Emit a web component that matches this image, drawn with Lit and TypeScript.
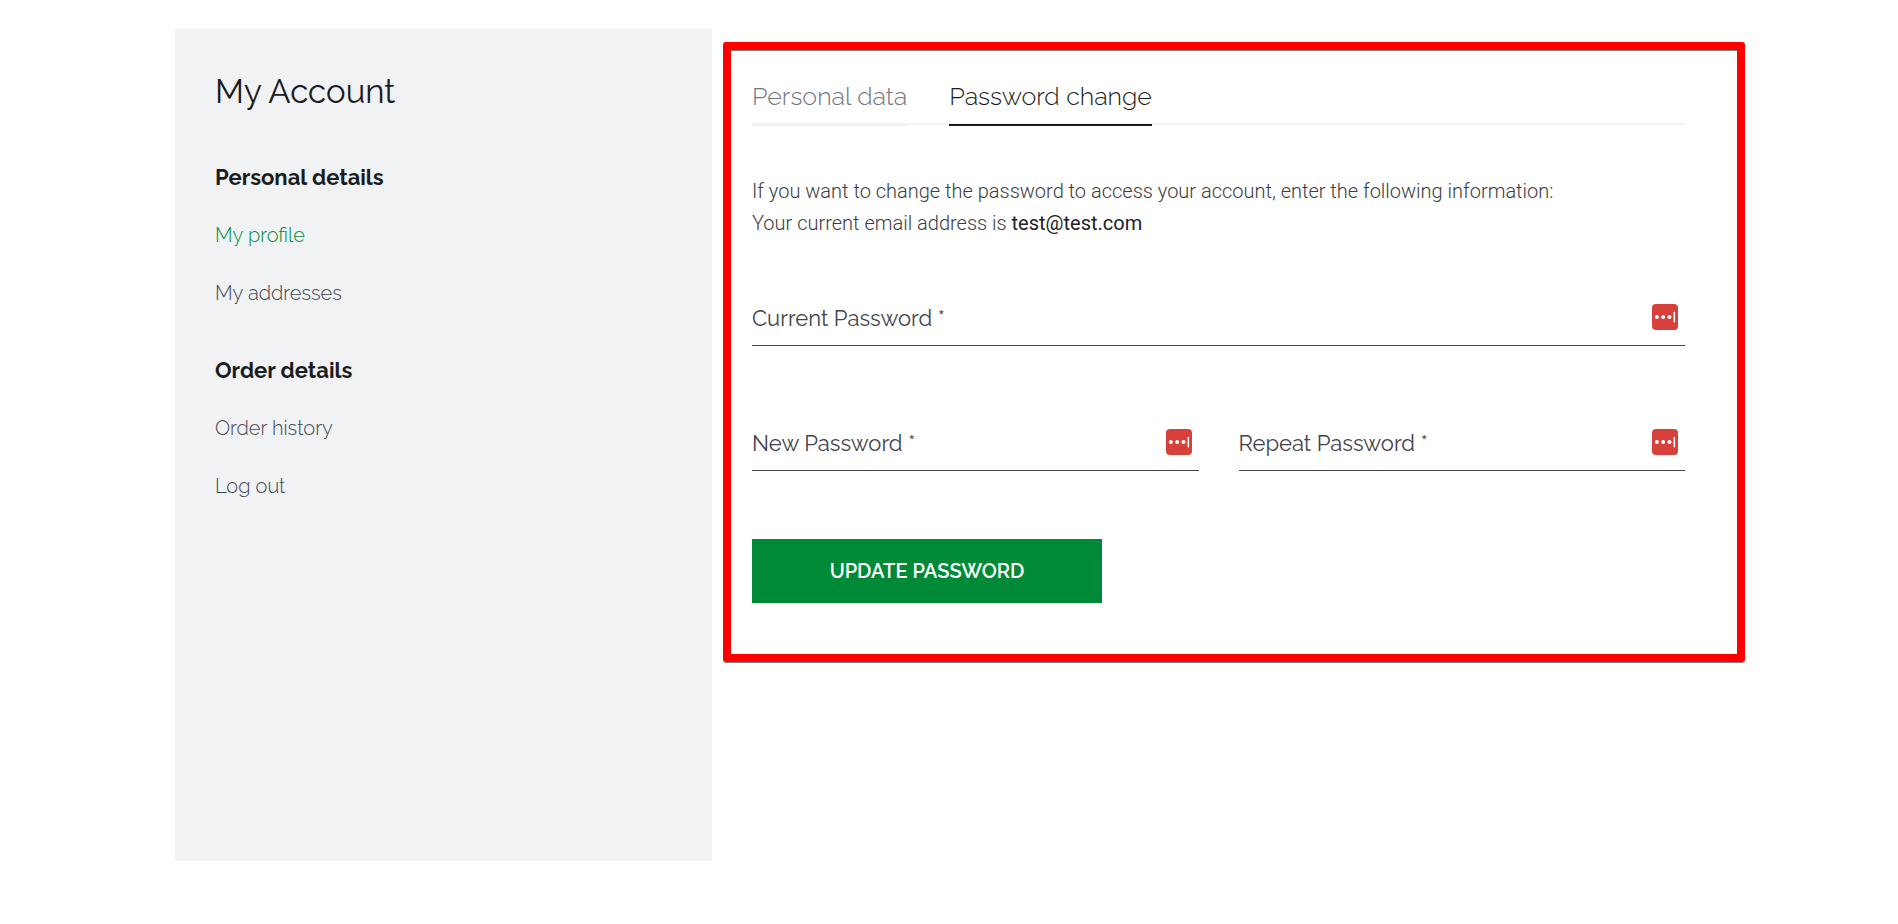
import { LitElement, html, css } from "lit";
import { customElement, property, state } from "lit/decorators.js";
import { classMap } from "lit/directives/class-map.js";

interface MenuItem {
  label: string;
  active?: boolean;
}

interface MenuGroup {
  title: string;
  items: MenuItem[];
}

const MENU: MenuGroup[] = [
  {
    title: "Personal details",
    items: [{ label: "My profile", active: true }, { label: "My addresses" }],
  },
  {
    title: "Order details",
    items: [{ label: "Order history" }, { label: "Log out" }],
  },
];

@customElement("account-menu")
class AccountMenu extends LitElement {
  static styles = css`
    :host {
      display: block;
      box-sizing: border-box;
      padding: 43px 40px;
      background: #f0f2f4;
      color: #1b1c20;
    }
    .title {
      margin: 0 0 50px;
      font-size: 33px;
      font-weight: 400;
      line-height: 40px;
    }
    .groups {
      display: flex;
      flex-direction: column;
      gap: 47px;
    }
    .group-title {
      margin: 0;
      font-size: 22px;
      font-weight: 700;
      line-height: 30px;
    }
    .links {
      display: flex;
      flex-direction: column;
      gap: 28px;
      margin: 28px 0 0;
      padding: 0;
      list-style: none;
      font-size: 20px;
      line-height: 30px;
    }
    .link {
      display: block;
      color: #43434c;
      font-weight: 300;
      text-decoration: none;
    }
    .active {
      color: #008a38;
    }
  `;

  render() {
    return html`
      <h1 class="title">My Account</h1>
      <nav class="groups">
        ${MENU.map(
          (group) => html`
            <section>
              <h2 class="group-title">${group.title}</h2>
              <ul class="links">
                ${group.items.map(
                  (item) => html`<li>
                    <a href="#" class=${classMap({ link: true, active: !!item.active })}>${item.label}</a>
                  </li>`
                )}
              </ul>
            </section>
          `
        )}
      </nav>
    `;
  }
}

@customElement("password-field")
class PasswordField extends LitElement {
  @property() label = "";
  @state() private filled = false;

  static styles = css`
    :host {
      display: block;
      min-width: 0;
    }
    .field {
      display: grid;
      grid-template-columns: minmax(0, 1fr) auto;
      align-items: center;
      padding: 17px 0 12px;
      border-bottom: 1px solid #43434c;
      column-gap: 8px;
    }
    .label,
    .input {
      grid-row: 1;
      grid-column: 1;
      font-family: inherit;
      font-size: 22px;
      font-weight: 400;
      line-height: 30px;
    }
    .label {
      color: #43434c;
      pointer-events: none;
    }
    .hidden {
      visibility: hidden;
    }
    .input {
      box-sizing: border-box;
      width: 100%;
      height: 30px;
      padding: 0;
      border: 0;
      outline: 0;
      background: transparent;
      color: #1b1c20;
    }
    .manager {
      display: block;
      grid-row: 1;
      grid-column: 2;
      width: 26px;
      height: 26px;
      margin: 0 7px 2px 0;
    }
  `;

  private onInput(e: Event) {
    this.filled = (e.target as HTMLInputElement).value !== "";
  }

  render() {
    return html`
      <div class="field">
        <input id="password" class="input" type="password" required @input=${this.onInput} />
        <label for="password" class=${classMap({ label: true, hidden: this.filled })}>${this.label} *</label>
        <svg class="manager" viewBox="0 0 26 26" aria-hidden="true">
          <rect width="26" height="26" rx="4" fill="#d8403b" />
          <circle cx="4.9" cy="13" r="2" fill="#fff" />
          <circle cx="11.2" cy="13" r="2" fill="#fff" />
          <circle cx="17.5" cy="13" r="2" fill="#fff" />
          <rect x="21.6" y="7.7" width="1.5" height="10.8" rx="0.7" fill="#fff" />
        </svg>
      </div>
    `;
  }
}

@customElement("password-panel")
class PasswordPanel extends LitElement {
  static styles = css`
    :host {
      display: block;
      box-sizing: border-box;
      padding: 30px 52px 51px 21px;
      border: 8px solid #ff0000;
      border-radius: 3px;
      box-shadow: 0 1px 0 #808080, inset 0 1px 0 #808080;
    }
    .tabs {
      display: flex;
      gap: 42px;
      border-bottom: 2px solid #f2f2f3;
    }
    .tab {
      margin-bottom: -3px;
      padding-bottom: 12px;
      border-bottom: 2px solid #f2f2f3;
      color: #74747f;
      font-size: 25px;
      font-weight: 300;
      line-height: 32px;
      text-decoration: none;
    }
    .selected {
      border-color: #1b1c20;
      color: #1b1c20;
    }
    .intro {
      margin: 50px 0 47px;
      color: #3c3c42;
      font-family: Roboto, sans-serif;
      font-size: 20px;
      font-weight: 300;
      line-height: 32px;
    }
    .email {
      color: #222226;
      font-weight: 400;
    }
    .pair {
      display: grid;
      grid-template-columns: 1fr 1fr;
      gap: 40px;
      margin: 65px 0 68px;
    }
    .submit {
      width: 350px;
      max-width: 100%;
      height: 64px;
      display: block;
      padding: 0;
      border: 0;
      background: #008a38;
      color: #fff;
      font-family: inherit;
      font-size: 20px;
      font-weight: 600;
      line-height: 30px;
      text-transform: uppercase;
      cursor: pointer;
    }
  `;

  render() {
    return html`
      <nav class="tabs">
        <a href="#" class="tab">Personal data</a>
        <a href="#" class="tab selected" aria-current="page">Password change</a>
      </nav>
      <p class="intro">
        If you want to change the password to access your account, enter the following information:<br />
        Your current email address is <strong class="email">test@test.com</strong>
      </p>
      <form @submit=${(e: Event) => e.preventDefault()}>
        <password-field label="Current Password"></password-field>
        <div class="pair">
          <password-field label="New Password"></password-field>
          <password-field label="Repeat Password"></password-field>
        </div>
        <button class="submit" type="submit">Update password</button>
      </form>
    `;
  }
}

@customElement("app-root")
class AppRoot extends LitElement {
  static styles = css`
    :host {
      display: block;
      background: #fff;
      font-family: Raleway, "Open Sans", sans-serif;
    }
    .page {
      display: grid;
      grid-template-columns: minmax(0, 537fr) minmax(0, 1022fr);
      column-gap: 11px;
      align-items: start;
      max-width: 1570px;
      margin: 0 auto;
      padding: 29px 0 63px 22px;
    }
    .menu {
      min-height: calc(100vh - 92px);
    }
    .panel {
      margin-top: 13px;
    }
  `;

  render() {
    return html`
      <div class="page">
        <account-menu class="menu"></account-menu>
        <password-panel class="panel"></password-panel>
      </div>
    `;
  }
}
